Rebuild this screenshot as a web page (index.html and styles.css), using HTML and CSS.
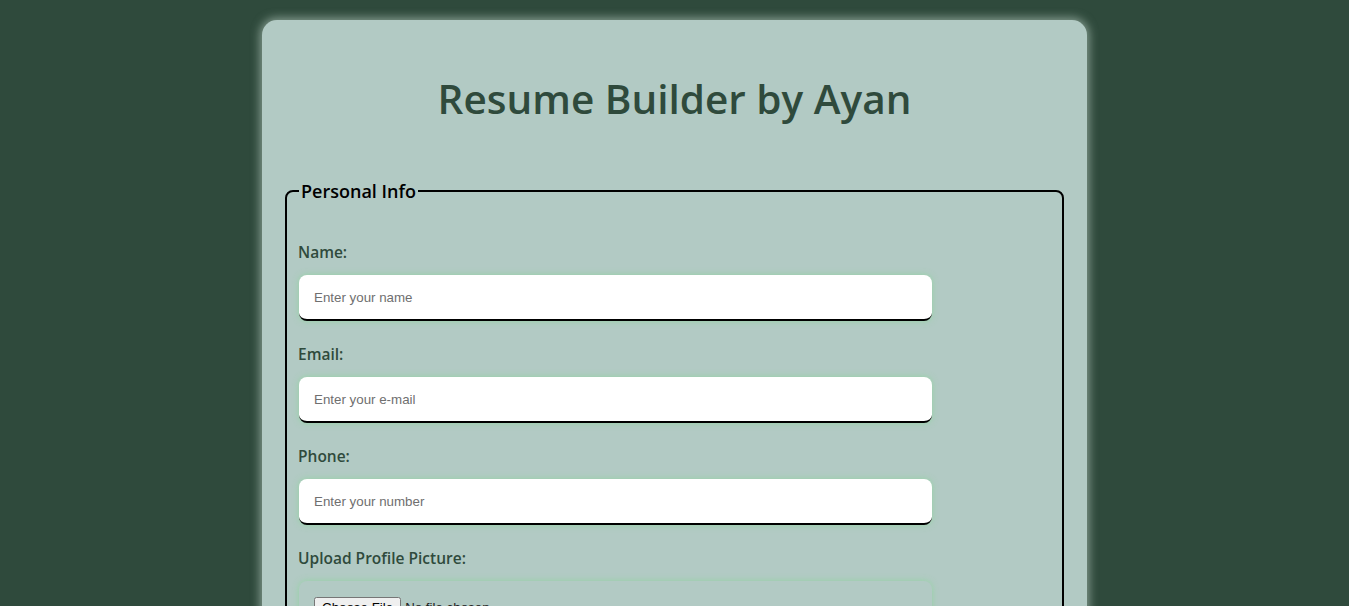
FILE: index.html
```html
<!DOCTYPE html>
<html lang="en">
<head>
<meta charset="UTF-8">
<title>Resume Builder</title>
<link rel="stylesheet" href="styles.css">
</head>
<body>
<div class="container">
  <h1 class="title">Resume Builder by Ayan</h1>
  <form class="form">
    <fieldset class="section">
      <legend class="legend">Personal Info</legend>
      <div class="field">
        <label class="label" for="name">Name:</label>
        <input class="input" type="text" id="name" placeholder="Enter your name">
      </div>
      <div class="field">
        <label class="label" for="email">Email:</label>
        <input class="input" type="email" id="email" placeholder="Enter your e-mail">
      </div>
      <div class="field">
        <label class="label" for="phone">Phone:</label>
        <input class="input" type="tel" id="phone" placeholder="Enter your number">
      </div>
      <div class="field">
        <label class="label" for="pic">Upload Profile Picture:</label>
        <input class="input file" type="file" id="pic">
      </div>
    </fieldset>
  </form>
</div>
</body>
</html>
```
FILE: styles.css
```css
html, body {
  margin: 0;
  padding: 0;
}
body {
  background: #2f4a3c;
  font-family: "Open Sans", "DejaVu Sans", sans-serif;
  padding-top: 20px;
  min-height: 100vh;
}
.container {
  width: 825px;
  box-sizing: border-box;
  margin: 0 auto;
  background: #b2cac4;
  border-radius: 15px;
  padding: 20px 23px 40px;
  box-shadow: 0 0 10px 2px rgba(205, 225, 215, 0.55);
}
.title {
  margin: 30px 0 0;
  text-align: center;
  font-size: 40.5px;
  font-weight: 600;
  color: #2f4a3c;
  line-height: 57px;
}
.form {
  margin: 0;
}
.section {
  margin: 52px 0 0;
  border: 2px solid #000;
  border-radius: 8px;
  padding: 16px 12px 20px;
}
.legend {
  padding: 0 2px;
  font-size: 18px;
  font-weight: 600;
  color: #000;
}
.field {
  margin-top: 22px;
}
.label {
  display: block;
  font-size: 15.5px;
  font-weight: 600;
  color: #2f4a3c;
  margin: 0 0 12px -1px;
  line-height: 22px;
}
.input {
  display: block;
  width: 633px;
  height: 46px;
  box-sizing: border-box;
  border: none;
  border-bottom: 2px solid #000;
  border-radius: 8px;
  background: #fff;
  padding: 0 15px;
  font-family: "Liberation Sans", Arial, sans-serif;
  font-size: 13.33px;
  color: #222;
  box-shadow: 0 0 6px rgba(140, 215, 155, 0.8);
  outline: none;
}
.input::placeholder {
  color: #6f6f6f;
}
.file {
  background: transparent;
  height: auto;
  padding: 16px 15px;
  border-bottom: none;
}
```
